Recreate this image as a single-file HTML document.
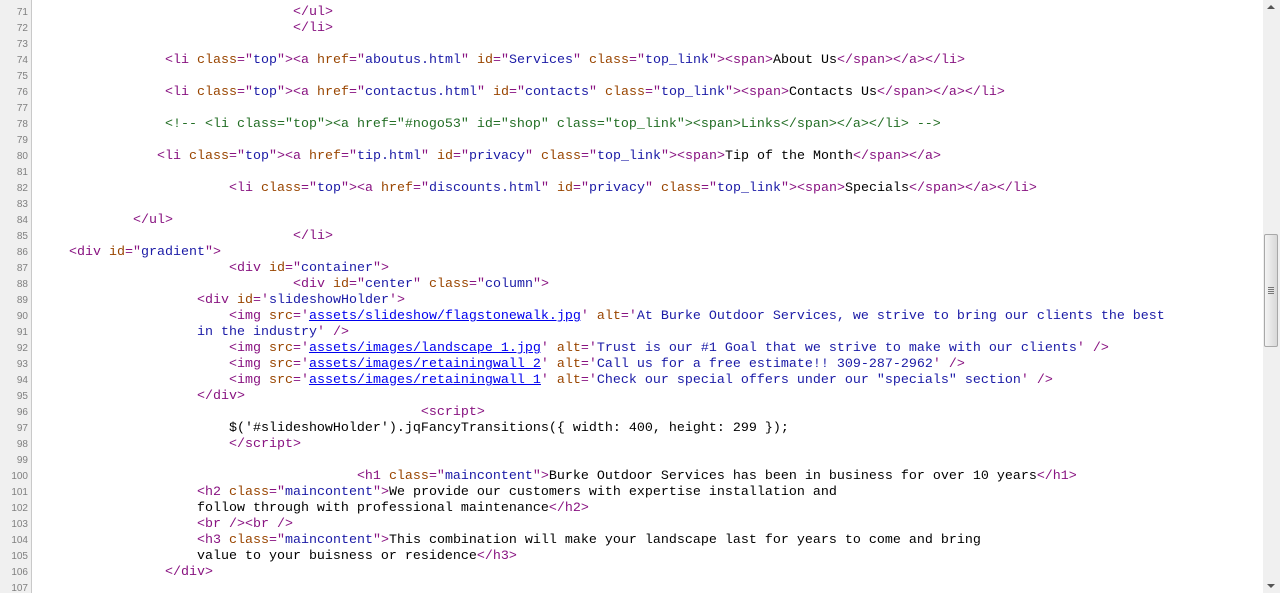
<!DOCTYPE html>
<html><head><meta charset="utf-8"><style>
html,body{margin:0;padding:0;width:1280px;height:593px;overflow:hidden;background:#fff;}
.g{position:absolute;left:0;top:0;width:31px;height:593px;background:#f0f0f0;border-right:1px solid #c9c9c9;}
.n{position:absolute;left:0;width:28px;text-align:right;font:10px "Liberation Sans",sans-serif;color:#808080;line-height:16px;margin-top:2px;}
.l{position:absolute;left:37px;white-space:pre;font:13.333px "Liberation Mono",monospace;line-height:16px;color:#000;margin-top:2px;}
.t{color:#881280}.a{color:#994500}.v{color:#1a1aa6}.c{color:#236e25}
.u{text-decoration:underline;color:#0000ee}
.sb{position:absolute;left:1263px;top:0;width:17px;height:593px;background:#f0f0f0;}
.th{position:absolute;left:1264px;top:234px;width:14px;height:113px;background:linear-gradient(90deg,#f4f4f4,#d8d8d8);border:1px solid #a8a8a8;border-radius:2px;box-sizing:border-box;}
</style></head><body>
<div class="g"></div>
<div class="n" style="top:3px">71</div><div class="n" style="top:19px">72</div><div class="n" style="top:35px">73</div><div class="n" style="top:51px">74</div><div class="n" style="top:67px">75</div><div class="n" style="top:83px">76</div><div class="n" style="top:99px">77</div><div class="n" style="top:115px">78</div><div class="n" style="top:131px">79</div><div class="n" style="top:147px">80</div><div class="n" style="top:163px">81</div><div class="n" style="top:179px">82</div><div class="n" style="top:195px">83</div><div class="n" style="top:211px">84</div><div class="n" style="top:227px">85</div><div class="n" style="top:243px">86</div><div class="n" style="top:259px">87</div><div class="n" style="top:275px">88</div><div class="n" style="top:291px">89</div><div class="n" style="top:307px">90</div><div class="n" style="top:323px">91</div><div class="n" style="top:339px">92</div><div class="n" style="top:355px">93</div><div class="n" style="top:371px">94</div><div class="n" style="top:387px">95</div><div class="n" style="top:403px">96</div><div class="n" style="top:419px">97</div><div class="n" style="top:435px">98</div><div class="n" style="top:451px">99</div><div class="n" style="top:467px">100</div><div class="n" style="top:483px">101</div><div class="n" style="top:499px">102</div><div class="n" style="top:515px">103</div><div class="n" style="top:531px">104</div><div class="n" style="top:547px">105</div><div class="n" style="top:563px">106</div><div class="n" style="top:579px">107</div>

<div class="l" style="top:3px">                                <span class="t">&lt;/ul&gt;</span></div>
<div class="l" style="top:19px">                                <span class="t">&lt;/li&gt;</span></div>
<div class="l" style="top:51px">                <span class="t">&lt;li <span class="a">class</span>="<span class="v">top</span>"&gt;</span><span class="t">&lt;a <span class="a">href</span>="<span class="v">aboutus.html</span>" <span class="a">id</span>="<span class="v">Services</span>" <span class="a">class</span>="<span class="v">top_link</span>"&gt;</span><span class="t">&lt;span&gt;</span>About Us<span class="t">&lt;/span&gt;&lt;/a&gt;&lt;/li&gt;</span></div>
<div class="l" style="top:83px">                <span class="t">&lt;li <span class="a">class</span>="<span class="v">top</span>"&gt;</span><span class="t">&lt;a <span class="a">href</span>="<span class="v">contactus.html</span>" <span class="a">id</span>="<span class="v">contacts</span>" <span class="a">class</span>="<span class="v">top_link</span>"&gt;</span><span class="t">&lt;span&gt;</span>Contacts Us<span class="t">&lt;/span&gt;&lt;/a&gt;&lt;/li&gt;</span></div>
<div class="l" style="top:115px">                <span class="c">&lt;!-- &lt;li class="top"&gt;&lt;a href="#nogo53" id="shop" class="top_link"&gt;&lt;span&gt;Links&lt;/span&gt;&lt;/a&gt;&lt;/li&gt; --&gt;</span></div>
<div class="l" style="top:147px">               <span class="t">&lt;li <span class="a">class</span>="<span class="v">top</span>"&gt;</span><span class="t">&lt;a <span class="a">href</span>="<span class="v">tip.html</span>" <span class="a">id</span>="<span class="v">privacy</span>" <span class="a">class</span>="<span class="v">top_link</span>"&gt;</span><span class="t">&lt;span&gt;</span>Tip of the Month<span class="t">&lt;/span&gt;&lt;/a&gt;</span></div>
<div class="l" style="top:179px">                        <span class="t">&lt;li <span class="a">class</span>="<span class="v">top</span>"&gt;</span><span class="t">&lt;a <span class="a">href</span>="<span class="v">discounts.html</span>" <span class="a">id</span>="<span class="v">privacy</span>" <span class="a">class</span>="<span class="v">top_link</span>"&gt;</span><span class="t">&lt;span&gt;</span>Specials<span class="t">&lt;/span&gt;&lt;/a&gt;&lt;/li&gt;</span></div>
<div class="l" style="top:211px">            <span class="t">&lt;/ul&gt;</span></div>
<div class="l" style="top:227px">                                <span class="t">&lt;/li&gt;</span></div>
<div class="l" style="top:243px">    <span class="t">&lt;div <span class="a">id</span>="<span class="v">gradient</span>"&gt;</span></div>
<div class="l" style="top:259px">                        <span class="t">&lt;div <span class="a">id</span>="<span class="v">container</span>"&gt;</span></div>
<div class="l" style="top:275px">                                <span class="t">&lt;div <span class="a">id</span>="<span class="v">center</span>" <span class="a">class</span>="<span class="v">column</span>"&gt;</span></div>
<div class="l" style="top:291px">                    <span class="t">&lt;div <span class="a">id</span>='<span class="v">slideshowHolder</span>'&gt;</span></div>
<div class="l" style="top:307px">                        <span class="t">&lt;img <span class="a">src</span>='<span class="u">assets/slideshow/flagstonewalk.jpg</span>' <span class="a">alt</span>='<span class="v">At Burke Outdoor Services, we strive to bring our clients the best</span></span></div>
<div class="l" style="top:323px">                    <span class="v">in the industry</span><span class="t">' /&gt;</span></div>
<div class="l" style="top:339px">                        <span class="t">&lt;img <span class="a">src</span>='<span class="u">assets/images/landscape_1.jpg</span>' <span class="a">alt</span>='<span class="v">Trust is our #1 Goal that we strive to make with our clients</span>' /&gt;</span></div>
<div class="l" style="top:355px">                        <span class="t">&lt;img <span class="a">src</span>='<span class="u">assets/images/retainingwall_2</span>' <span class="a">alt</span>='<span class="v">Call us for a free estimate!! 309-287-2962</span>' /&gt;</span></div>
<div class="l" style="top:371px">                        <span class="t">&lt;img <span class="a">src</span>='<span class="u">assets/images/retainingwall_1</span>' <span class="a">alt</span>='<span class="v">Check our special offers under our "specials" section</span>' /&gt;</span></div>
<div class="l" style="top:387px">                    <span class="t">&lt;/div&gt;</span></div>
<div class="l" style="top:403px">                                                <span class="t">&lt;script&gt;</span></div>
<div class="l" style="top:419px">                        $('#slideshowHolder').jqFancyTransitions({ width: 400, height: 299 });</div>
<div class="l" style="top:435px">                        <span class="t">&lt;/script&gt;</span></div>
<div class="l" style="top:467px">                                        <span class="t">&lt;h1 <span class="a">class</span>="<span class="v">maincontent</span>"&gt;</span>Burke Outdoor Services has been in business for over 10 years<span class="t">&lt;/h1&gt;</span></div>
<div class="l" style="top:483px">                    <span class="t">&lt;h2 <span class="a">class</span>="<span class="v">maincontent</span>"&gt;</span>We provide our customers with expertise installation and</div>
<div class="l" style="top:499px">                    follow through with professional maintenance<span class="t">&lt;/h2&gt;</span></div>
<div class="l" style="top:515px">                    <span class="t">&lt;br /&gt;&lt;br /&gt;</span></div>
<div class="l" style="top:531px">                    <span class="t">&lt;h3 <span class="a">class</span>="<span class="v">maincontent</span>"&gt;</span>This combination will make your landscape last for years to come and bring</div>
<div class="l" style="top:547px">                    value to your buisness or residence<span class="t">&lt;/h3&gt;</span></div>
<div class="l" style="top:563px">                <span class="t">&lt;/div&gt;</span></div>

<div class="sb"></div>
<div class="th"></div>
<div style="position:absolute;left:1267px;top:5px;width:0;height:0;border-left:4px solid transparent;border-right:4px solid transparent;border-bottom:4px solid #555"></div>
<div style="position:absolute;left:1267px;top:584px;width:0;height:0;border-left:4px solid transparent;border-right:4px solid transparent;border-top:4px solid #555"></div>
<div style="position:absolute;left:1268px;top:287px;width:6px;height:7px;background:repeating-linear-gradient(#777 0 1px,transparent 1px 2px)"></div>
</body></html>
